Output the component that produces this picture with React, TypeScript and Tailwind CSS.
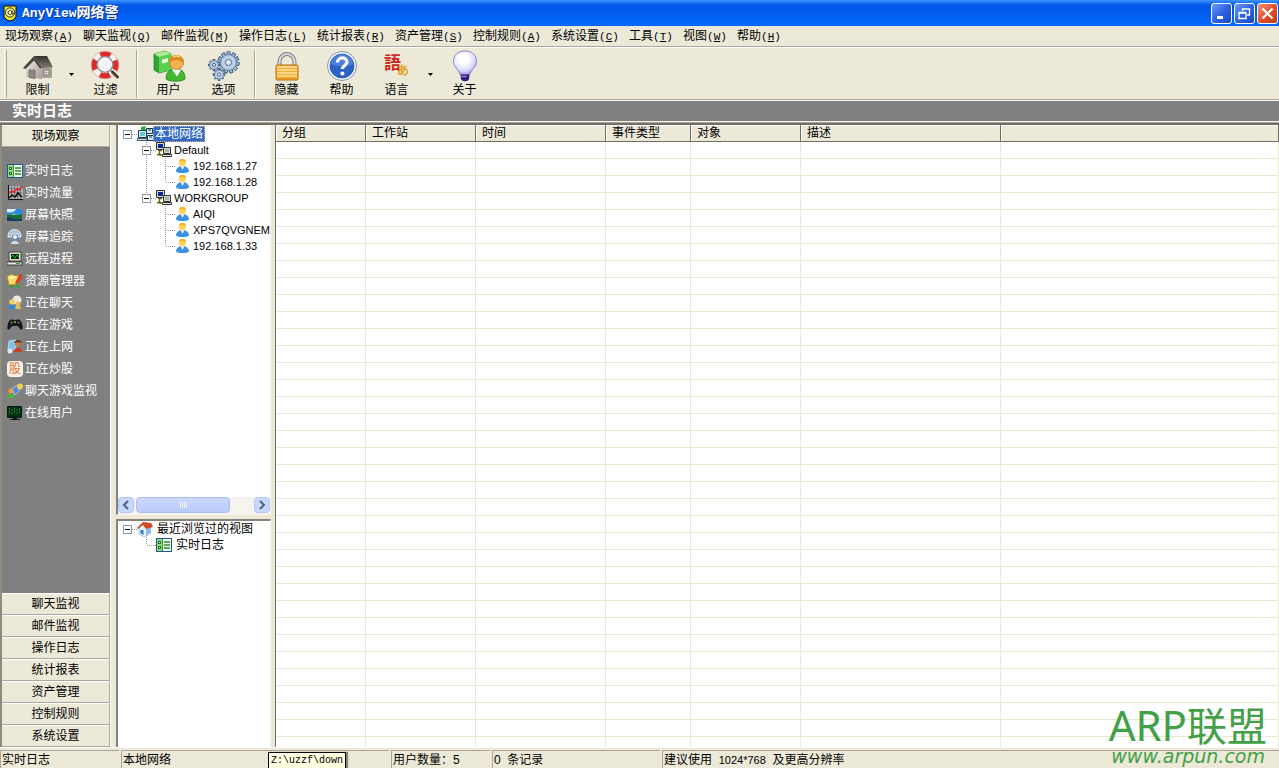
import { useState } from 'react';
import type { ReactNode } from 'react';
import clsx from 'clsx';

const menus = [
  { label: '现场观察', key: 'A' },
  { label: '聊天监视', key: 'Q' },
  { label: '邮件监视', key: 'M' },
  { label: '操作日志', key: 'L' },
  { label: '统计报表', key: 'R' },
  { label: '资产管理', key: 'S' },
  { label: '控制规则', key: 'A' },
  { label: '系统设置', key: 'C' },
  { label: '工具', key: 'T' },
  { label: '视图', key: 'W' },
  { label: '帮助', key: 'H' },
];

const columns = [
  { label: '分组', width: 'w-[90px]' },
  { label: '工作站', width: 'w-[110px]' },
  { label: '时间', width: 'w-[130px]' },
  { label: '事件类型', width: 'w-[85px]' },
  { label: '对象', width: 'w-[110px]' },
  { label: '描述', width: 'w-[200px]' },
  { label: '', width: '' },
];

const bottomSections = ['聊天监视', '邮件监视', '操作日志', '统计报表', '资产管理', '控制规则', '系统设置'];

/* ---------- toolbar icons, 32x32 ---------- */

const HouseIcon = () => (
  <svg width="32" height="32" viewBox="0 0 32 32">
    <defs>
      <linearGradient id="roof" x1="0" y1="0" x2="0" y2="1">
        <stop offset="0" stopColor="#34302a" />
        <stop offset="1" stopColor="#837b6d" />
      </linearGradient>
      <linearGradient id="wall" x1="0" y1="0" x2="1" y2="1">
        <stop offset="0" stopColor="#f1ede6" />
        <stop offset="1" stopColor="#a59c95" />
      </linearGradient>
    </defs>
    <path d="M19 16h11v12H19z" fill="#a8a09a" />
    <path d="m12 8 8 10v11l-16-2V18z" fill="url(#wall)" />
    <path d="M12 6h13l6 11-11 1z" fill="url(#roof)" />
    <path d="m12 6 8 12-2 .5-6-8-8.500 8.500L1 18z" fill="#4b463e" />
    <path d="M7 20h6v8.500L7 27.500z" fill="#8f8680" stroke="#6c645e" strokeWidth=".7" />
    <path d="M22 20h5v5h-5z" fill="#f3f0ea" stroke="#6f6862" strokeWidth=".8" />
    <path d="M24.500 20v5M22 22.500h5" stroke="#8f8880" strokeWidth=".6" />
  </svg>
);

const FilterIcon = () => (
  <svg width="32" height="32" viewBox="0 0 32 32">
    <circle cx="15" cy="15" r="11" fill="none" stroke="#f7f3ee" strokeWidth="6" />
    <circle cx="15" cy="15" r="11" fill="none" stroke="#dd2a2a" strokeWidth="5.600" strokeDasharray="10.280 7" strokeDashoffset="5.140" />
    <circle cx="15" cy="15" r="13.800" fill="none" stroke="#d99a92" strokeWidth=".7" />
    <circle cx="15" cy="14.500" r="7.800" fill="#f1f3f7" stroke="#8d8f96" strokeWidth="1.300" />
    <path d="M10 13a6 5 0 0 1 8-3.500" stroke="#fff" strokeWidth="2" fill="none" />
    <path d="m20.500 20 2.500 2.500" stroke="#9b9b9b" strokeWidth="2.400" />
    <path d="m22.500 22 5 5" stroke="#463b38" strokeWidth="3" strokeLinecap="round" />
  </svg>
);

const UserIcon = () => (
  <svg width="34" height="32" viewBox="0 0 34 32">
    <path d="M2 4 13 1l6 3v16L7 23l-5-3z" fill="#2fa52f" stroke="#1b7a20" strokeWidth=".7" />
    <path d="M7 7l12-3v16L7 23z" fill="#5dd04f" />
    <path d="M2 4 13 1l6 3L7 7z" fill="#a8ec96" />
    <path d="M10 9.500l6-1.500v4l-6 1.500z" fill="#e6fbdc" />
    <path d="M14 29c0-6 3-10 10-10s9 4 9 10c-4 3-15 3-19 0z" fill="#42b833" stroke="#1f7d1c" strokeWidth=".8" />
    <path d="M20 19.500l5 7 4-6.500c-3-1.500-6-1.500-9-.5z" fill="#f2fbef" />
    <circle cx="24.500" cy="12.500" r="7" fill="#f3b254" stroke="#b36f12" strokeWidth=".7" />
    <path d="M17.500 13c-1-6 3-8 7-8s8 3 7 8c-3-2-5-3-7-3-3 0-5 1-7 3z" fill="#dc8a1b" />
    <path d="M21 7c2-1 5-1 7 0" stroke="#f9cf78" strokeWidth="1.500" fill="none" />
  </svg>
);

const Gear = ({ cx, cy, r, teeth }: { cx: number; cy: number; r: number; teeth: number }) => (
  <g transform={`translate(${cx} ${cy})`}>
    {Array.from({ length: teeth }, (_, i) => (
      <rect
        key={i}
        x={-r / 5}
        y={-r - r / 3}
        width={r / 2.5}
        height={r / 2}
        transform={`rotate(${(360 / teeth) * i})`}
        fill="#a3bddb"
        stroke="#3c5878"
        strokeWidth=".9"
      />
    ))}
    <circle r={r} fill="#a9c3e0" stroke="#4a6688" strokeWidth=".6" />
    <circle r={r * 0.85} fill="#bdd2e9" />
    <circle r={r / 2.6} fill="#e6eaef" stroke="#4a6688" />
  </g>
);

const OptionsIcon = () => (
  <svg width="32" height="32" viewBox="0 0 32 32">
    <Gear cx={20.5} cy={12.5} r={8} teeth={11} />
    <Gear cx={6} cy={15} r={4.2} teeth={8} />
    <Gear cx={11} cy={24.5} r={4.4} teeth={8} />
  </svg>
);

const LockIcon = () => (
  <svg width="32" height="32" viewBox="0 0 32 32">
    <path d="M8.500 17v-5a7.500 8 0 0 1 15 0v5" fill="none" stroke="#7d7d7d" strokeWidth="4" />
    <path d="M8.500 17v-5a7.500 8 0 0 1 15 0v5" fill="none" stroke="#dcdcdc" strokeWidth="2" />
    <rect x="5" y="15" width="22" height="15" rx="1" fill="#f4ad35" stroke="#b56f11" />
    <path d="M6 17h20M6 20h20M6 23h20M6 26h20" stroke="#fde3a0" strokeWidth="1.400" />
    <path d="M6 29h20" stroke="#d98917" />
  </svg>
);

const HelpIcon = () => (
  <svg width="32" height="32" viewBox="0 0 32 32">
    <circle cx="16" cy="16" r="14.500" fill="#f4f7fc" stroke="#8297bb" />
    <circle cx="16" cy="16" r="12" fill="#2f62c9" stroke="#264c9c" strokeWidth=".8" />
    <path d="M5 14a11 10 0 0 1 22 0c-6 3-16 3-22 0z" fill="#5b8ae2" opacity=".7" />
    <path d="M11.500 12.500c0-6 9.500-6 9.500-.500 0 3.500-4.600 3.500-4.600 7" fill="none" stroke="#fff" strokeWidth="3.200" />
    <circle cx="16.400" cy="23.500" r="2" fill="#fff" />
  </svg>
);

// the two glyphs are live text
const LanguageIcon = () => (
  <svg width="32" height="32" viewBox="0 0 32 32" aria-hidden="true" fontFamily="'Noto Sans CJK JP', sans-serif" fontWeight="700">
    <text x="3" y="19" fontSize="17" fill="#cc2a1c">語</text>
    <text x="16" y="25" fontSize="12" fill="#e2a51f">あ</text>
  </svg>
);

const BulbIcon = () => (
  <svg width="32" height="32" viewBox="0 0 32 32">
    <defs>
      <radialGradient id="glass" cx=".42" cy=".32" r=".68">
        <stop offset=".3" stopColor="#fff" />
        <stop offset=".75" stopColor="#dcd8ff" />
        <stop offset="1" stopColor="#9f94e0" />
      </radialGradient>
    </defs>
    <path d="M16 1C8.500 1 4.500 5.500 4.500 11.500c0 5.500 5 7.500 7 13.500h9c2-6 7-8 7-13.500C27.500 5.500 23.500 1 16 1z" fill="url(#glass)" stroke="#8b83c4" />
    <path d="M11.500 24.500h9l-.5 4.500c-1 3-7 3-8 0z" fill="#341c78" />
    <path d="M12.500 26.500h5" stroke="#9a8ae0" strokeWidth="1.400" />
  </svg>
);

/* ---------- 16x16 icons ---------- */

const LogIcon = () => (
  <svg width="16" height="16" viewBox="0 0 16 16">
    <rect x=".5" y="1.500" width="15" height="13" fill="#eefbe8" stroke="#22559c" />
    <path d="M1 2h5v12H1z" fill="#8fdc7a" />
    <path d="M6.500 2v12" stroke="#3c9338" />
    <path d="M2.500 4.500h2v2h-2zM2.500 9.500h2v2h-2z" fill="#eefbe8" stroke="#11601a" />
    <path d="M8 5h6M8 8h6M8 11h6" stroke="#2c8c33" strokeWidth="1.300" />
  </svg>
);

const FlowIcon = () => (
  <svg width="16" height="16" viewBox="0 0 16 16">
    <path d="M2 1h14v13H2z" fill="#b2b2b2" />
    <path d="M4.500 1v15M7.500 1v15M10.500 1v15M13.500 1v15M0 3.500h15M0 7.500h15M0 11.500h15" stroke="#555" strokeWidth=".6" fill="none" />
    <path d="M1.500 0v14.500H16" stroke="#111" fill="none" />
    <path d="m2 8 3-2 2 1 3-3 2 1 4-4" stroke="#e02b35" strokeWidth="1.700" fill="none" />
    <path d="m2 13 3-3 3 2 3-4 4 4" stroke="#111" strokeWidth="1.500" fill="none" />
  </svg>
);

const SnapshotIcon = () => (
  <svg width="16" height="16" viewBox="0 0 16 16">
    <rect y="2" width="15" height="12" fill="#2a8be0" />
    <path d="M0 2h9c-1 3-5 4-9 3z" fill="#d9f2ff" />
    <path d="M0 8c4-1 7 2 15-1v7H0z" fill="#1c6a35" />
    <path d="M0 11c5-2 8 3 15 1v2H0z" fill="#123d66" />
    <path d="M4 8c2-2 4-2 6 0z" fill="#7ec64b" />
  </svg>
);

const TrackIcon = () => (
  <svg width="16" height="16" viewBox="0 0 16 16">
    <path d="M1 8c-1-10 14-10 13 0h-3V5H5v3z" fill="#a9c3dc" stroke="#e6eff7" strokeWidth=".9" />
    <path d="M5 6h6v7H5z" fill="#6a89a8" />
    <circle cx="8" cy="8" r="2" fill="#e8f3fb" />
    <path d="M4 15c0-4 8-4 8 0z" fill="#d5e0ea" />
  </svg>
);

const ProcessIcon = () => (
  <svg width="16" height="16" viewBox="0 0 16 16">
    <path d="M2 1h12v9H2z" fill="#dcd8c8" stroke="#333" strokeWidth=".8" />
    <path d="M4 3h8v5H4z" fill="#04240b" />
    <path d="m4 6 2-2 2 3 2-3 2 2" stroke="#2ee052" strokeWidth=".8" fill="none" />
    <path d="M0 11h15v3H0z" fill="#ece9d8" stroke="#222" strokeWidth=".8" />
    <path d="M9 12.500h4" stroke="#3a9b44" />
  </svg>
);

const ExplorerIcon = () => (
  <svg width="16" height="16" viewBox="0 0 16 16">
    <path d="M0 3l5-2 3 2 4-1-1 9-9 1z" fill="#f6dd6a" stroke="#a97f14" strokeWidth=".7" />
    <path d="M3 5l6-1" stroke="#fffbd6" strokeWidth="1.500" />
    <path d="m15 1-3 1-4 8 2 1 5-6z" fill="#dc3d1f" />
    <path d="M4 12l-2 3h4l1-3M9 11l1 4h4l-3-4" fill="#3da03a" />
  </svg>
);

const ChatIcon = () => (
  <svg width="16" height="16" viewBox="0 0 16 16">
    <circle cx="10" cy="5" r="4.500" fill="#ece9e0" />
    <circle cx="5" cy="7" r="2.800" fill="#f2cf63" />
    <path d="M1 14c0-6 8-6 8 0z" fill="#2f8ad0" />
    <circle cx="11" cy="9" r="2.400" fill="#e9bb4c" />
    <path d="M8 14c0-5 6-5 6 0z" fill="#d7c06a" />
  </svg>
);

const GameIcon = () => (
  <svg width="16" height="16" viewBox="0 0 16 16">
    <path d="M3 3c2-1 3 0 5 0s3-1 5 0c2 2 3 6 2.500 9-1.500 2-3-1-4.500-3H5c-1.500 2-3 5-4.500 3C0 9 1 5 3 3z" fill="#161616" />
    <circle cx="4.500" cy="5.500" r="1.200" fill="#666" />
    <circle cx="11.500" cy="5.500" r="1" fill="#777" />
    <circle cx="8" cy="5" r="1" fill="#7ed04a" />
  </svg>
);

const WebIcon = () => (
  <svg width="16" height="16" viewBox="0 0 16 16">
    <path d="M2 2l7-1v9l-8 1z" fill="#7cc3ee" stroke="#d9eefb" strokeWidth=".7" />
    <circle cx="11" cy="4.500" r="3" fill="#d07a3c" />
    <path d="M7.500 4c0-4 7-4 7 0-2-1-5-1-7 0z" fill="#6b2f14" />
    <path d="M7 13c0-6 8-6 8 0z" fill="#cc3b23" />
    <circle cx="3" cy="12" r="2.500" fill="#dceafa" />
  </svg>
);

// the glyph is live text so it follows the UI font
const StockIcon = () => (
  <span className="flex h-4 w-4 items-center justify-center rounded-sm bg-[#fdf0e4] text-[12px] leading-4 text-[#e07a3a]" aria-hidden="true">
    股
  </span>
);

const ChatGameIcon = () => (
  <svg width="16" height="16" viewBox="0 0 16 16">
    <path d="m5 6 5-4 3 5-5 5z" fill="#4c8be4" stroke="#cfe2fa" strokeWidth=".7" />
    <circle cx="13" cy="3.500" r="3" fill="#f0cd45" />
    <circle cx="4" cy="8" r="2.500" fill="#ef9d38" />
    <path d="M0 15c0-6 8-6 8 0z" fill="#57b14a" />
  </svg>
);

const OnlineIcon = () => (
  <svg width="16" height="16" viewBox="0 0 16 16">
    <path d="M.5 1.500h14v11H.5z" fill="#032c10" stroke="#0a1a0e" />
    <path d="M2.500 3v7M5 4v6M7.500 2.500v5M10 4v6M12.500 3v6" stroke="#1d8a3a" strokeDasharray="2 1" />
    <path d="M6 13h4v1h3v1H3v-1h3z" fill="#111" />
  </svg>
);

const NetworkIcon = () => (
  <svg width="17" height="16" viewBox="0 0 17 16">
    <path d="M4 1l5-1-1 3 2 1-6 1z" fill="#2aa836" />
    <path d="M1.500 4.500h8v7h-8zM9.500 2.500h6v5h-6zM10.500 9.500h6v5h-6z" fill="#dfeaf2" stroke="#123b5c" />
    <path d="M3 6h5v4H3z" fill="#62cbd8" />
    <path d="M0 12.500h10v2H0z" fill="#d5dbe2" stroke="#123b5c" strokeWidth=".8" />
    <path d="M11 4h3M12 11h3" stroke="#123b5c" />
  </svg>
);

const GroupIcon = () => (
  <svg width="16" height="16" viewBox="0 0 16 16">
    <path d="M.5.500h8v7h-8z" fill="#d9d6c5" stroke="#333" />
    <path d="M2 2h5v4H2z" fill="#0c2a94" />
    <path d="M7.500 5.500h7v6h-7z" fill="#d9d6c5" stroke="#333" />
    <path d="M9 7h4v3H9z" fill="#9db8a5" />
    <path d="M6.500 12.500h9v2h-9z" fill="#ece9d8" stroke="#333" />
    <path d="M2 8.500h4M3.500 9v4H7M1 12.500h4" stroke="#5c6810" strokeWidth="1.300" fill="none" />
  </svg>
);

const PersonIcon = () => (
  <svg width="16" height="16" viewBox="0 0 16 16">
    <path d="M1 13.500c0-7.500 13-7.500 13 0-2 2-11 2-13 0z" fill="#3d8fe6" />
    <path d="M5.500 8h4l-2 4z" fill="#e8f4ff" />
    <circle cx="7.500" cy="4.500" r="3.600" fill="#f9d35c" />
    <path d="M4 4c0-4.500 7-4.500 7 0-2-1.500-5-1.500-7 0z" fill="#f0b62a" />
  </svg>
);

const HomeIcon = () => (
  <svg width="16" height="16" viewBox="0 0 16 16">
    <path d="M2 7l4-4 5 4v7l-4 2-5-3z" fill="#e5f1fc" stroke="#89a6c4" strokeWidth=".6" />
    <path d="M9 8l5-2v6l-5 3z" fill="#8dbbe8" />
    <path d="M0 7 6 1l8 1 2 4-7 2-3-4-5 4z" fill="#cf4a22" />
    <path d="M3.500 9h3v5l-3-1.500z" fill="#3a7fca" />
  </svg>
);

const sideItems: { label: string; icon: ReactNode }[] = [
  { label: '实时日志', icon: <LogIcon /> },
  { label: '实时流量', icon: <FlowIcon /> },
  { label: '屏幕快照', icon: <SnapshotIcon /> },
  { label: '屏幕追踪', icon: <TrackIcon /> },
  { label: '远程进程', icon: <ProcessIcon /> },
  { label: '资源管理器', icon: <ExplorerIcon /> },
  { label: '正在聊天', icon: <ChatIcon /> },
  { label: '正在游戏', icon: <GameIcon /> },
  { label: '正在上网', icon: <WebIcon /> },
  { label: '正在炒股', icon: <StockIcon /> },
  { label: '聊天游戏监视', icon: <ChatGameIcon /> },
  { label: '在线用户', icon: <OnlineIcon /> },
];

/* ---------- tree ---------- */

type Guide = 'blank' | 'line' | 'tee' | 'elbow' | 'root';

interface TreeRow {
  guides: Guide[];
  expandable?: boolean;
  icon: ReactNode;
  label: string;
}

const networkTree: TreeRow[] = [
  { guides: ['root'], expandable: true, icon: <NetworkIcon />, label: '本地网络' },
  { guides: ['blank', 'tee'], expandable: true, icon: <GroupIcon />, label: 'Default' },
  { guides: ['blank', 'line', 'tee'], icon: <PersonIcon />, label: '192.168.1.27' },
  { guides: ['blank', 'line', 'elbow'], icon: <PersonIcon />, label: '192.168.1.28' },
  { guides: ['blank', 'elbow'], expandable: true, icon: <GroupIcon />, label: 'WORKGROUP' },
  { guides: ['blank', 'blank', 'tee'], icon: <PersonIcon />, label: 'AIQI' },
  { guides: ['blank', 'blank', 'tee'], icon: <PersonIcon />, label: 'XPS7QVGNEMF' },
  { guides: ['blank', 'blank', 'elbow'], icon: <PersonIcon />, label: '192.168.1.33' },
];

const recentTree: TreeRow[] = [
  { guides: ['root'], expandable: true, icon: <HomeIcon />, label: '最近浏览过的视图' },
  { guides: ['blank', 'elbow'], icon: <LogIcon />, label: '实时日志' },
];

const GuideCell = ({ kind, box }: { kind: Guide; box?: boolean }) => (
  <svg width="19" height="16" viewBox="0 0 19 16" className="block">
    <g stroke="#9c9c9c" strokeDasharray="1 1">
      {(kind === 'line' || kind === 'tee') && <path d="M9.500 0v16" />}
      {kind === 'elbow' && <path d="M9.500 0v8" />}
      {(kind === 'tee' || kind === 'elbow' || kind === 'root') && <path d="M10 8.500h9" />}
    </g>
    {box && (
      <>
        <rect x="5.500" y="4.500" width="8" height="8" fill="#fff" stroke="#8d9aab" />
        <path d="M7 8.500h5" stroke="#000" />
      </>
    )}
  </svg>
);

const Tree = ({ rows, selected, wide }: { rows: TreeRow[]; selected?: string; wide?: boolean }) => (
  <ul className="text-[11px] leading-4">
    {rows.map((row) => (
      <li key={row.label} className="flex h-4 items-center whitespace-nowrap">
        {row.guides.map((g, i) =>
          row.expandable && i === row.guides.length - 1 ? (
            <button key={i} type="button" aria-label={`折叠 ${row.label}`} className="shrink-0">
              <GuideCell kind={g} box />
            </button>
          ) : (
            <span key={i} className="shrink-0">
              <GuideCell kind={g} />
            </span>
          ),
        )}
        <span className="w-4 shrink-0">{row.icon}</span>
        <span
          className={clsx(
            'h-4',
            /[^\x00-\x7f]/.test(row.label) && 'text-[12px]',
            wide ? 'ml-1' : row.label === selected ? 'ml-0' : 'ml-0.5',
            row.label === selected && 'bg-[#316ac5] px-0.5 text-white outline-1 -outline-offset-1 outline-dotted outline-[#e0b080]',
          )}
        >
          {row.label}
        </span>
      </li>
    ))}
  </ul>
);

const ScrollArrow = ({ dir }: { dir: 'left' | 'right' }) => (
  <button
    type="button"
    aria-label={dir === 'left' ? '向左滚动' : '向右滚动'}
    className="flex h-4 w-4 shrink-0 items-center justify-center rounded-sm border border-[#b4c6f4] bg-[#c8d7fc]"
  >
    <svg width="8" height="10" viewBox="0 0 8 10">
      <path d={dir === 'left' ? 'M6 1 2 5l4 4' : 'M2 1l4 4-4 4'} fill="none" stroke="#4d6185" strokeWidth="2" />
    </svg>
  </button>
);

/* ---------- toolbar ---------- */

const ToolButton = ({ label, children }: { label: string; children: ReactNode }) => (
  <button type="button" className="flex w-[55px] shrink-0 flex-col items-center pt-0.5">
    <span className="flex h-8 items-center">{children}</span>
    <span className="leading-4">{label}</span>
  </button>
);

const ToolArrow = ({ label }: { label: string }) => (
  <button type="button" aria-label={label} className="flex w-[13px] shrink-0 items-center justify-center">
    <svg width="5" height="3" viewBox="0 0 5 3">
      <path d="M0 0h5L2.500 3z" fill="#000" />
    </svg>
  </button>
);

const ToolSeparator = () => (
  <div className="flex w-2 shrink-0 justify-center py-0.5">
    <div className="w-0.5 border-r border-l border-r-white border-l-[#aca899]" />
  </div>
);

const WindowButton = ({ label, danger, children }: { label: string; danger?: boolean; children: ReactNode }) => (
  <button
    type="button"
    aria-label={label}
    className={clsx(
      'flex h-[21px] w-[21px] items-center justify-center rounded-[3px] border border-white bg-linear-to-br',
      danger ? 'from-[#f0937a] via-[#e0502c] to-[#c33a12]' : 'from-[#6f9bf5] via-[#2c63e2] to-[#1a48c4]',
    )}
  >
    <svg width="15" height="15" viewBox="0 0 15 15" fill="none" stroke="#fff">
      {children}
    </svg>
  </button>
);

const PanelButton = ({ label }: { label: string }) => (
  <button
    type="button"
    className="block h-[22px] w-full border-t border-r border-b border-t-white border-r-[#aca899] border-b-[#aca899] bg-[#ece9d8] text-center leading-5"
  >
    {label}
  </button>
);

const StatusPane = ({ className, children }: { className?: string; children: ReactNode }) => (
  <div className={clsx('h-[18px] border-t border-l border-[#aca899] leading-[18px] whitespace-pre', className)}>{children}</div>
);

export default function App() {
  const [active, setActive] = useState('实时日志');

  return (
    <div className="relative flex h-screen flex-col overflow-hidden bg-[#ece9d8] font-['Liberation_Sans','Noto_Sans_CJK_SC',sans-serif] text-[12px] text-black">
      <header className="flex h-[26px] shrink-0 items-center bg-linear-to-b from-[#3c95ff] via-[#0055e5] via-20% to-[#0468ff] pr-px pl-[3px]">
        <svg width="14" height="17" viewBox="0 0 14 17">
          <path d="M1 1h12v11l-3 3-3 1-3-1-3-3z" fill="#f1e62a" stroke="#111" />
          <circle cx="7" cy="7.500" r="4.600" fill="#fff6a0" stroke="#222" strokeWidth=".9" />
          <path d="M9 5.500v3.500c1 .8 2 0 2-1.500M9 7.500a2 2 0 1 1-.1-.600" fill="none" stroke="#111" strokeWidth=".9" />
        </svg>
        <h1 className="ml-[5px] flex-1 text-[14px] font-bold text-white [text-shadow:1px_1px_0_#0a2f8f]">
          <span className="font-['Liberation_Mono',monospace] text-[13px]">AnyView</span>网络警
        </h1>
        <div className="flex gap-0.5">
          <WindowButton label="最小化">
            <path d="M3 11.500h6" strokeWidth="3" />
          </WindowButton>
          <WindowButton label="还原">
            <path d="M2 6.500h7v6H2zM2 7h7" strokeWidth="1.300" />
            <path d="M5.500 5V3h7v6H10M5.500 3h7" strokeWidth="1.300" />
          </WindowButton>
          <WindowButton label="关闭" danger>
            <path d="m2.500 2.500 10 10m0-10-10 10" strokeWidth="2.200" />
          </WindowButton>
        </div>
      </header>

      <nav className="flex h-[21px] shrink-0 items-center border-b border-[#aca899] pl-[5px]">
        {menus.map((m) => (
          <button
            key={m.label}
            type="button"
            className={clsx('shrink-0 text-left leading-4 whitespace-nowrap', m.label.length > 2 ? 'w-[78px]' : 'w-[54px]')}
          >
            {m.label}
            <span className="font-['Liberation_Mono',monospace] text-[11px]">
              (<u>{m.key}</u>)
            </span>
          </button>
        ))}
      </nav>

      <div className="flex h-[54px] shrink-0 border-t border-b border-white shadow-[inset_0_-1px_0_#aca899]">
        <div className="flex w-[10px] shrink-0 py-0.5 pl-1">
          <div className="w-[3px] border-r border-l border-r-[#aca899] border-l-white" />
        </div>
        <ToolButton label="限制"><HouseIcon /></ToolButton>
        <ToolArrow label="限制选项" />
        <ToolButton label="过滤"><FilterIcon /></ToolButton>
        <ToolSeparator />
        <ToolButton label="用户"><UserIcon /></ToolButton>
        <ToolButton label="选项"><OptionsIcon /></ToolButton>
        <ToolSeparator />
        <ToolButton label="隐藏"><LockIcon /></ToolButton>
        <ToolButton label="帮助"><HelpIcon /></ToolButton>
        <ToolButton label="语言"><LanguageIcon /></ToolButton>
        <ToolArrow label="语言选项" />
        <ToolButton label="关于"><BulbIcon /></ToolButton>
      </div>

      <h2 className="h-5 shrink-0 bg-[#808080] pl-3 text-[15px] leading-5 font-bold text-white">{active}</h2>
      <div className="h-1 shrink-0 border-t border-b-2 border-t-[#f4f2e8] border-b-[#716f64] bg-[#aca899]" />

      <main className="flex min-h-0 flex-1">
        <aside className="flex w-[111px] shrink-0 flex-col border-r border-l-2 border-r-white border-l-[#8f8c80] bg-[#808080]">
          <PanelButton label="现场观察" />
          <ul className="flex-1 pt-[13px]">
            {sideItems.map((item) => (
              <li key={item.label}>
                <button
                  type="button"
                  onClick={() => setActive(item.label)}
                  className="flex h-[22px] w-full items-center gap-0.5 pl-[5px] whitespace-nowrap text-white"
                >
                  <span className="w-4 shrink-0">{item.icon}</span>
                  {item.label}
                </button>
              </li>
            ))}
          </ul>
          <div>
            {bottomSections.map((s) => (
              <PanelButton key={s} label={s} />
            ))}
          </div>
        </aside>

        <section className="flex w-[164px] shrink-0 flex-col pr-1 pl-[5px]">
          <div className="flex min-h-0 flex-1 flex-col border-r border-b border-l-2 border-r-[#f6f4ea] border-b-[#f6f4ea] border-l-[#85827a] bg-white">
            <div className="min-h-0 flex-1 overflow-hidden pt-px">
              <Tree rows={networkTree} selected="本地网络" />
            </div>
            <div className="flex h-[17px] shrink-0 items-start bg-[#f5f4f0]">
              <ScrollArrow dir="left" />
              <div className="flex flex-1 pl-0.5">
                <div className="flex h-4 w-[94px] items-center justify-center gap-px rounded-sm border border-[#a9bdf0] bg-linear-to-b from-[#cbd9fd] to-[#bacbf8]">
                  <i className="h-1.5 w-px bg-[#eef4fe]" />
                  <i className="h-1.5 w-px bg-[#eef4fe]" />
                  <i className="h-1.5 w-px bg-[#eef4fe]" />
                  <i className="h-1.5 w-px bg-[#eef4fe]" />
                </div>
              </div>
              <ScrollArrow dir="right" />
            </div>
          </div>
          <div className="mt-1 h-[228px] shrink-0 overflow-hidden border-t-2 border-r border-l-2 border-t-[#85827a] border-r-[#f6f4ea] border-l-[#85827a] bg-white">
            <Tree rows={recentTree} wide />
          </div>
        </section>

        <section className="min-w-0 flex-1 overflow-hidden border-l border-[#716f64] bg-white">
          <table className="w-full table-fixed border-separate border-spacing-0">
            <thead>
              <tr>
                {columns.map((c) => (
                  <th
                    key={c.label}
                    className={clsx(
                      'h-[17px] border-r border-b border-[#716f64] bg-[#ece9d8] p-0 pl-1.5 text-left leading-4 font-normal shadow-[inset_1px_1px_0_#fff]',
                      c.width,
                    )}
                  >
                    {c.label}
                  </th>
                ))}
              </tr>
            </thead>
            <tbody>
              {/* filler rows keep the grid ruled down to the bottom edge */}
              {Array.from({ length: 80 }, (_, r) => (
                <tr key={r}>
                  {columns.map((c) => (
                    <td key={c.label} className="h-[17px] border-r border-b border-[#ebe9d3] p-0" />
                  ))}
                </tr>
              ))}
            </tbody>
          </table>
        </section>
      </main>

      <footer className="flex h-[21px] shrink-0 items-end gap-0.5 border-t border-white text-[12px]">
        <StatusPane className="w-[119px] pl-px">实时日志</StatusPane>
        <StatusPane className="w-[268px] pl-px">本地网络</StatusPane>
        <StatusPane className="w-[99px] pl-px">用户数量：5</StatusPane>
        <StatusPane className="w-[168px] pl-px">0  条记录</StatusPane>
        <StatusPane className="flex-1 pl-px">
          建议使用  <span className="text-[11px]">1024*768</span>  及更高分辨率
        </StatusPane>
      </footer>

      <div
        role="tooltip"
        className="absolute bottom-0 left-[268px] h-4 border border-b-0 border-black bg-[#ffffe1] px-0.5 font-['Liberation_Mono',monospace] text-[10px] leading-4 shadow-[2px_0_1px_#8a8778]"
      >
        {'Z:\\uzzf\\down'}
      </div>

      <div className="pointer-events-none absolute right-3 bottom-[3px] text-right text-[#43a047]">
        <div className="font-['Noto_Sans','Noto_Sans_CJK_SC',sans-serif] text-[42px] leading-[42px] whitespace-nowrap">
          ARP<span className="text-[40px]">联盟</span>
        </div>
        <div className="pr-0.5 font-['DejaVu_Sans',sans-serif] text-[19px] leading-[18px] italic">www.arpun.com</div>
      </div>
    </div>
  );
}
